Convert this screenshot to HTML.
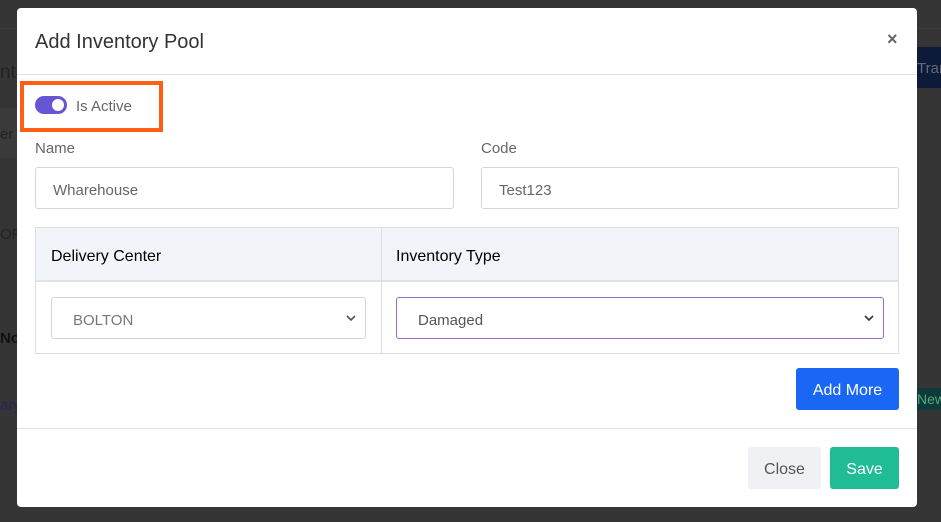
<!DOCTYPE html>
<html><head><meta charset="utf-8"><style>
*{box-sizing:border-box;margin:0;padding:0}
body{width:941px;height:522px;overflow:hidden;background:#353535;font-family:"Liberation Sans",sans-serif;position:relative}
.abs{position:absolute}
.modal{left:17px;top:8px;width:900px;height:499px;background:#fff;border-radius:4px}
.lbl{font-size:15px;color:#666}
.inp{border:1px solid #d5d5d5;border-radius:3px;height:42px;font-size:15px;color:#666;padding:14px 17px 0}
.chev{position:absolute;right:8px;top:14px;width:12px;height:12px}
.btn{font-size:16px;text-align:center;padding-top:14px;border-radius:3px}
</style></head><body>
<div class="abs" style="left:0;top:28px;width:941px;height:1px;background:#3c3c3c"></div>
<div class="abs" style="left:0;top:108px;width:17px;height:50px;background:#3a3a3a"></div>
<div class="abs" style="left:0;top:62px;font-size:19px;color:#222">nt</div>
<div class="abs" style="left:0;top:126px;font-size:15px;color:#222">er</div>
<div class="abs" style="left:0;top:226px;font-size:15px;color:#222">OFF</div>
<div class="abs" style="left:0;top:330px;font-size:15px;color:#111;font-weight:bold">No</div>
<div class="abs" style="left:0;top:397px;font-size:15px;color:#2a2456">ary</div>
<div class="abs" style="left:917px;top:47px;width:24px;height:41px;background:#0d1a3a;color:#667;font-size:15px;padding-top:13px">Tran</div>
<div class="abs" style="left:917px;top:388px;width:24px;height:22px;background:#0d3a3a;color:#5a7;font-size:14px;padding-top:3px">New</div>
<div class="abs modal">
 <div class="abs" style="left:18px;top:23px;font-size:20px;color:#333">Add Inventory Pool</div>
 <div class="abs" style="left:870px;top:21px;font-size:18px;color:#666;font-weight:bold">×</div>
 <div class="abs" style="left:0;top:66px;width:900px;height:1px;background:#e2e2e2"></div>
 <div class="abs" style="left:3px;top:73px;width:143px;height:51px;border:4px solid #ff5e14"></div>
 <div class="abs" style="left:18px;top:88px;width:32px;height:18px;border-radius:9px;background:#6656d6"></div>
 <div class="abs" style="left:35px;top:91px;width:12px;height:12px;border-radius:50%;background:#fff"></div>
 <div class="abs lbl" style="left:59px;top:90px">Is Active</div>
 <div class="abs lbl" style="left:18px;top:132px">Name</div>
 <div class="abs lbl" style="left:464px;top:132px">Code</div>
 <div class="abs inp" style="left:18px;top:159px;width:419px">Wharehouse</div>
 <div class="abs inp" style="left:464px;top:159px;width:418px">Test123</div>
 <div class="abs" style="left:18px;top:219px;width:864px;height:127px;border:1px solid #dedede"></div>
 <div class="abs" style="left:19px;top:220px;width:862px;height:54px;background:#f1f4f8;border-bottom:2px solid #e0e3e6"></div>
 <div class="abs" style="left:364px;top:220px;width:1px;height:126px;background:#dedede"></div>
 <div class="abs" style="left:34px;top:240px;font-size:16px;color:#000">Delivery Center</div>
 <div class="abs" style="left:379px;top:240px;font-size:16px;color:#000">Inventory Type</div>
 <div class="abs inp" style="left:34px;top:289px;width:315px;padding-left:21px;color:#777">BOLTON<svg class="chev" viewBox="0 0 12 12"><path d="M2 4l4 4 4-4" fill="none" stroke="#555" stroke-width="1.6"/></svg></div>
 <div class="abs inp" style="left:379px;top:289px;width:488px;padding-left:21px;border-color:#9a6ccc;color:#555">Damaged<svg class="chev" viewBox="0 0 12 12"><path d="M2 4l4 4 4-4" fill="none" stroke="#333" stroke-width="1.6"/></svg></div>
 <div class="abs btn" style="left:779px;top:360px;width:103px;height:42px;background:#1a66f5;color:#fff">Add More</div>
 <div class="abs" style="left:0;top:420px;width:900px;height:1px;background:#e2e2e2"></div>
 <div class="abs btn" style="left:731px;top:439px;width:73px;height:42px;background:#eff1f4;color:#555">Close</div>
 <div class="abs btn" style="left:813px;top:439px;width:69px;height:42px;background:#1fbc96;color:#fff">Save</div>
</div>
</body></html>
